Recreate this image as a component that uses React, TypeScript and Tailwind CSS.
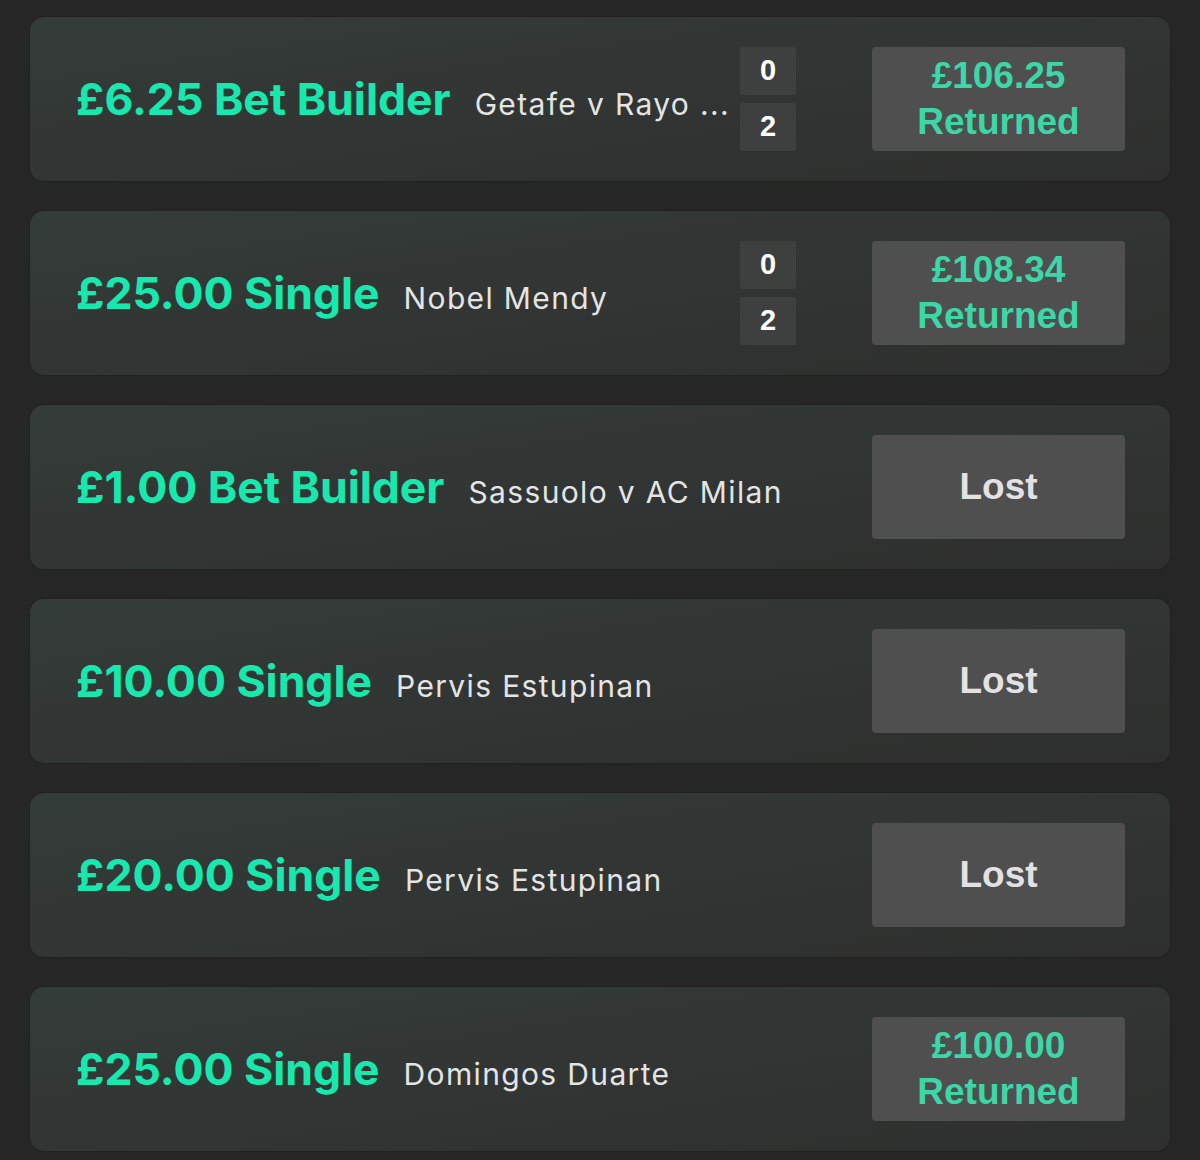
type Bet = {
  stake: string
  kind: string
  event: string
  score?: [string, string]
  result: string
  returned?: boolean
}

const bets: Bet[] = [
  {stake: "£6.25", kind: "Bet Builder", event: "Getafe v Rayo ...", score: ["0", "2"], result: "£106.25", returned: true},
  {stake: "£25.00", kind: "Single", event: "Nobel Mendy", score: ["0", "2"], result: "£108.34", returned: true},
  {stake: "£1.00", kind: "Bet Builder", event: "Sassuolo v AC Milan", result: "Lost"},
  {stake: "£10.00", kind: "Single", event: "Pervis Estupinan", result: "Lost"},
  {stake: "£20.00", kind: "Single", event: "Pervis Estupinan", result: "Lost"},
  {stake: "£25.00", kind: "Single", event: "Domingos Duarte", result: "£100.00", returned: true},
]

function BetRow({bet}: {bet: Bet}) {
  return (
    <div className="flex h-[164px] shrink-0 items-center rounded-[14px] bg-linear-to-br from-[#343c39] via-[#313533] to-[#2e2f2e] pl-[46px] pr-[45px] shadow-[0_0_2px_rgba(0,0,0,0.4)]">
      <div className={`flex min-w-0 items-baseline ${bet.score ? "flex-1" : ""}`}>
        <span className="shrink-0 whitespace-nowrap font-['Inter',sans-serif] text-[44.5px] font-bold text-[#17e9ae]">
          {bet.stake} {bet.kind}
        </span>
        <span className="ml-[24px] whitespace-nowrap font-['Inter',sans-serif] text-[30px] tracking-[0.045em] text-[#e4e4e4]">
          {bet.event}
        </span>
      </div>
      {bet.score && (
        <div className="ml-[6px] flex w-[56px] shrink-0 flex-col gap-[8px]">
          {bet.score.map((s, i) => (
            <div key={i} className="flex h-[48px] items-center justify-center rounded-[2px] bg-[#3e3f3f] font-['Liberation_Sans',sans-serif] text-[29px] font-bold text-white">
              {s}
            </div>
          ))}
        </div>
      )}
      <div className={`${bet.score ? "ml-[76px]" : "ml-auto"} flex h-[104px] w-[253px] shrink-0 flex-col items-center justify-center rounded-[4px] bg-[#4f4f4f] font-['Liberation_Sans',sans-serif] text-[37px] font-bold leading-[46px]`}>
        {bet.returned ? (
          <>
            <span className="text-[#3dd6a6]">{bet.result}</span>
            <span className="text-[#3dd6a6]">Returned</span>
          </>
        ) : (
          <span className="text-[#e2e2e2]">{bet.result}</span>
        )}
      </div>
    </div>
  )
}

function App() {
  return (
    <div className="flex h-[1160px] flex-col gap-[30px] overflow-hidden bg-[#262626] px-[30px] pt-[17px]">
      {bets.map((bet, i) => (
        <BetRow key={i} bet={bet} />
      ))}
    </div>
  )
}

export default App
